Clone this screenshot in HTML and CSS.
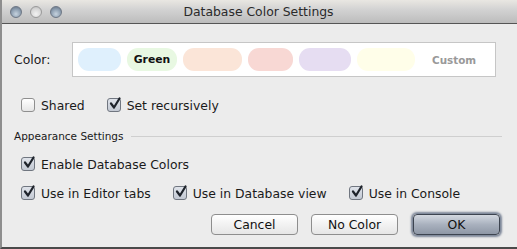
FILE: index.html
```html
<!DOCTYPE html>
<html>
<head>
    <title>Database Color Settings</title>
    <link rel="stylesheet" href="styles.css">
</head>
<body>
    <div class="window">
        <div class="titlebar">
            <div class="lights">
                <span class="light"></span>
                <span class="light off"></span>
                <span class="light"></span>
            </div>
            <div class="title">Database Color Settings</div>
        </div>
        <div class="content">
            <div class="color-row">
                <label class="color-label">Color:</label>
                <div class="swatches">
                    <span class="pill blue w43"></span>
                    <span class="pill green w50">Green</span>
                    <span class="pill peach w59"></span>
                    <span class="pill pink w45"></span>
                    <span class="pill lavender w52"></span>
                    <span class="pill yellow w58"></span>
                    <span class="custom">Custom</span>
                </div>
            </div>

            <div class="check-row first">
                <label class="check"><span class="box"></span>Shared</label>
                <label class="check"><span class="box checked"><svg viewBox="0 0 14 14"><path d="M3 6.5 L6 10.5 L11.5 1.5" /></svg></span>Set recursively</label>
            </div>

            <div class="section">
                <span class="section-title">Appearance Settings</span>
                <span class="section-line"></span>
            </div>

            <div class="check-row enable">
                <label class="check"><span class="box checked"><svg viewBox="0 0 14 14"><path d="M3 6.5 L6 10.5 L11.5 1.5" /></svg></span>Enable Database Colors</label>
            </div>

            <div class="check-row use">
                <label class="check"><span class="box checked"><svg viewBox="0 0 14 14"><path d="M3 6.5 L6 10.5 L11.5 1.5" /></svg></span>Use in Editor tabs</label>
                <label class="check"><span class="box checked"><svg viewBox="0 0 14 14"><path d="M3 6.5 L6 10.5 L11.5 1.5" /></svg></span>Use in Database view</label>
                <label class="check"><span class="box checked"><svg viewBox="0 0 14 14"><path d="M3 6.5 L6 10.5 L11.5 1.5" /></svg></span>Use in Console</label>
            </div>

            <div class="buttons">
                <button class="btn">Cancel</button>
                <button class="btn">No Color</button>
                <button class="btn default">OK</button>
            </div>
        </div>
    </div>
</body>
</html>
```

FILE: styles.css
```css
body {
    margin: 0;
    font-family: 'Lucida Grande', 'DejaVu Sans', sans-serif;
    font-size: 12.4px;
    color: #1a1a1a;
    background: #ececec;
}
.window {
    width: 517px;
    height: 249px;
    box-sizing: border-box;
    background: #ececec;
    border-left: 2px solid #8e8e8e;
    border-bottom: 2px solid #4a4a4a;
    overflow: hidden;
}
.titlebar {
    position: relative;
    height: 23px;
    margin-left: -2px;
    background: linear-gradient(#e9e7e2, #d3d3d3 40%, #bcbcbc);
    border-bottom: 1px solid #555;
    display: flex;
    align-items: center;
    justify-content: center;
}
.lights {
    position: absolute;
    left: 10px;
    top: 6px;
    display: flex;
    gap: 8px;
}
.light {
    width: 12px;
    height: 12px;
    border-radius: 50%;
    box-sizing: border-box;
    border: 1px solid #6d7785;
    background: radial-gradient(circle at 50% 70%, #c6d3df 0%, #8e9fb1 55%, #5f6e80 100%);
}
.light.off {
    border-color: #9a9a9a;
    background: radial-gradient(circle at 50% 70%, #f2f2f2 0%, #d6d6d6 60%, #b5b5b5 100%);
}
.title {
    font-size: 12.4px;
    color: #2a2a2a;
}
.content {
    padding: 18px 15px 0 12px;
}
.color-row {
    display: flex;
    align-items: center;
    height: 35px;
}
.color-label {
    width: 58px;
}
.swatches {
    box-sizing: border-box;
    width: 424px;
    height: 35px;
    background: white;
    border: 1px solid #c6c6c6;
    display: flex;
    align-items: center;
    padding-left: 5px;
    gap: 6px;
}
.pill {
    height: 23px;
    border-radius: 11px;
    font-size: 10.8px;
    font-weight: bold;
    display: flex;
    align-items: center;
    justify-content: center;
}
.w43 { width: 43px; }
.w50 { width: 50px; }
.w59 { width: 59px; }
.w45 { width: 45px; }
.w52 { width: 52px; }
.w58 { width: 58px; }
.blue { background: #dff0fd; }
.green { background: #e8f8e2; color: #111; }
.peach { background: #fbe5d8; }
.pink { background: #f8d8d4; }
.lavender { background: #e6ddf2; }
.yellow { background: #fffee9; }
.custom {
    margin-left: 11px;
    font-size: 10.4px;
    font-weight: bold;
    color: #999;
}
.check-row {
    display: flex;
    align-items: center;
    height: 14px;
    padding-left: 7px;
    gap: 22px;
}
.check-row.first { margin-top: 21px; }
.check-row.enable { margin-top: 14px; }
.check-row.use { margin-top: 15px; }
.check {
    display: flex;
    align-items: center;
    gap: 6px;
}
.box {
    width: 14px;
    height: 14px;
    box-sizing: border-box;
    border: 1px solid #8f8f8f;
    border-radius: 3px;
    background: linear-gradient(#ffffff, #e6e6e6);
    position: relative;
}
.box.checked {
    background: linear-gradient(#dfe3ea, #c3c9d3);
    border-color: #707680;
}
.box svg {
    position: absolute;
    left: 0;
    top: -2px;
    width: 14px;
    height: 14px;
}
.box path {
    fill: none;
    stroke: #1e232b;
    stroke-width: 2.2;
    stroke-linecap: round;
    stroke-linejoin: round;
}
.section {
    display: flex;
    align-items: center;
    height: 14px;
    margin-top: 17px;
}
.section-title {
    font-size: 10.5px;
}
.section-line {
    flex: 1;
    height: 1px;
    background: #cfcfcf;
    margin-left: 8px;
}
.buttons {
    display: flex;
    justify-content: flex-end;
    gap: 13px;
    margin-top: 14px;
}
.btn {
    width: 87px;
    height: 21px;
    font-family: 'Lucida Grande', 'DejaVu Sans', sans-serif;
    font-size: 12.4px;
    color: #111;
    border: 1px solid #8e8e8e;
    border-radius: 4px;
    background: linear-gradient(#ffffff, #f2f2f2 50%, #e6e6e6);
    padding: 0;
}
.btn.default {
    margin-left: 2px;
    margin-right: 2px;
    border-color: #3d4450;
    background: linear-gradient(#d3d8e0, #a9b1be 50%, #8e97a6);
    box-shadow: 0 0 2px 2px #7d8799;
}
```
